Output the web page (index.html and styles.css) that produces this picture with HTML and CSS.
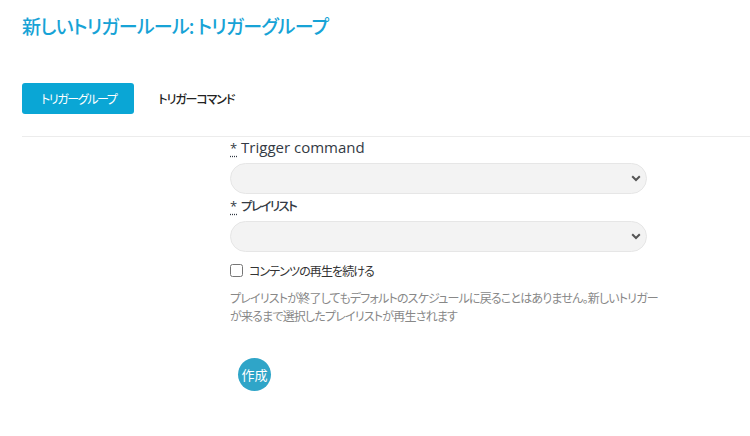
FILE: index.html
```html
<!DOCTYPE html>
<html lang="ja">
<head>
<meta charset="utf-8">
<title>新しいトリガールール</title>
<link rel="stylesheet" href="styles.css">
</head>
<body>
<div class="page">
  <h1 class="title">新しいトリガールール: トリガーグループ</h1>
  <div class="tabs">
    <button class="tab tab-active" type="button">トリガーグループ</button>
    <button class="tab" type="button">トリガーコマンド</button>
  </div>
</div>
<div class="divider"></div>
<form class="form">
  <label class="label"><abbr class="req" title="required">*</abbr> Trigger command</label>
  <div class="select-wrap">
    <select class="select"><option></option></select>
    <svg class="chev" width="10" height="7" viewBox="0 0 10 7"><path d="M1.2 1.3 L5 5 L8.8 1.3" fill="none" stroke="#555" stroke-width="2"/></svg>
  </div>
  <label class="label label-2"><abbr class="req" title="required">*</abbr> <span class="ja">プレイリスト</span></label>
  <div class="select-wrap">
    <select class="select"><option></option></select>
    <svg class="chev" width="10" height="7" viewBox="0 0 10 7"><path d="M1.2 1.3 L5 5 L8.8 1.3" fill="none" stroke="#555" stroke-width="2"/></svg>
  </div>
  <label class="check-row"><input type="checkbox" class="check"> <span>コンテンツの再生を続ける</span></label>
  <p class="help">プレイリストが終了してもデフォルトのスケジュールに戻ることはありません。新しいトリガーが来るまで選択したプレイリストが再生されます</p>
  <button class="create" type="button">作成</button>
</form>
</body>
</html>
```

FILE: styles.css
```css
html, body {
  margin: 0;
  padding: 0;
  background: #ffffff;
}
body {
  font-family: "Noto Sans CJK JP", "Noto Sans", sans-serif;
  font-feature-settings: "palt";
  color: #333;
}
.page {
  padding-left: 22px;
}
.title {
  margin: 0;
  padding-top: 12px;
  font-size: 19px;
  line-height: 28px;
  font-weight: 500;
  color: #17a3d6;
  letter-spacing: -0.75px;
}
.tabs {
  display: flex;
  gap: 7px;
  margin-top: 43px;
}
.tab {
  font-family: inherit;
  font-feature-settings: "palt";
  font-size: 12px;
  letter-spacing: -1.1px;
  font-weight: 500;
  height: 31px;
  padding: 0 17px;
  border: none;
  border-radius: 3px;
  background: transparent;
  color: #222;
  cursor: pointer;
}
.tab-active {
  background: #0aa6d5;
  color: #fff;
  font-weight: 400;
  padding: 0 18px 0 19px;
  letter-spacing: -1.4px;
}
.divider {
  margin: 22px 0 0 22px;
  height: 1px;
  background: #ececec;
}
.form {
  margin-left: 230px;
  width: 417px;
  display: flex;
  flex-direction: column;
  align-items: stretch;
}
.label {
  display: block;
  margin-top: 1px;
  font-family: "Open Sans", "Noto Sans CJK JP", sans-serif;
  font-size: 15px;
  line-height: 18px;
  font-weight: 500;
  color: #333a44;
}
.label .ja {
  font-family: "Noto Sans CJK JP", sans-serif;
  font-size: 12.5px;
  letter-spacing: -1.6px;
}
.label-2 {
  margin-top: 2px;
}
.req {
  font-size: 13px;
  text-decoration: underline dotted;
  text-underline-offset: 3px;
}
.select-wrap {
  position: relative;
  margin-top: 6px;
  height: 31px;
}
.label-2 + .select-wrap {
  margin-top: 6px;
}
.select {
  appearance: none;
  -webkit-appearance: none;
  width: 100%;
  height: 31px;
  border: 1px solid #e6e6e6;
  border-radius: 16px;
  background: #f3f3f3;
  font-family: inherit;
  font-size: 13px;
}
.chev {
  position: absolute;
  right: 6px;
  top: 12px;
  pointer-events: none;
}
.check-row {
  display: flex;
  align-items: center;
  gap: 6px;
  margin-top: 9px;
  height: 18px;
  font-size: 12px;
  letter-spacing: -0.9px;
  color: #333;
}
.check {
  margin: 0;
  width: 13px;
  height: 13px;
}
.help {
  margin: 10px -18px 0 0;
  font-size: 12px;
  letter-spacing: -0.8px;
  line-height: 18px;
  color: #888;
}
.create {
  align-self: flex-start;
  margin: 33px 0 0 8px;
  width: 33px;
  height: 33px;
  border-radius: 50%;
  border: none;
  padding: 0;
  background: #2fa5c8;
  color: #fff;
  font-family: inherit;
  font-size: 13px;
  font-weight: 400;
  cursor: pointer;
}
```
